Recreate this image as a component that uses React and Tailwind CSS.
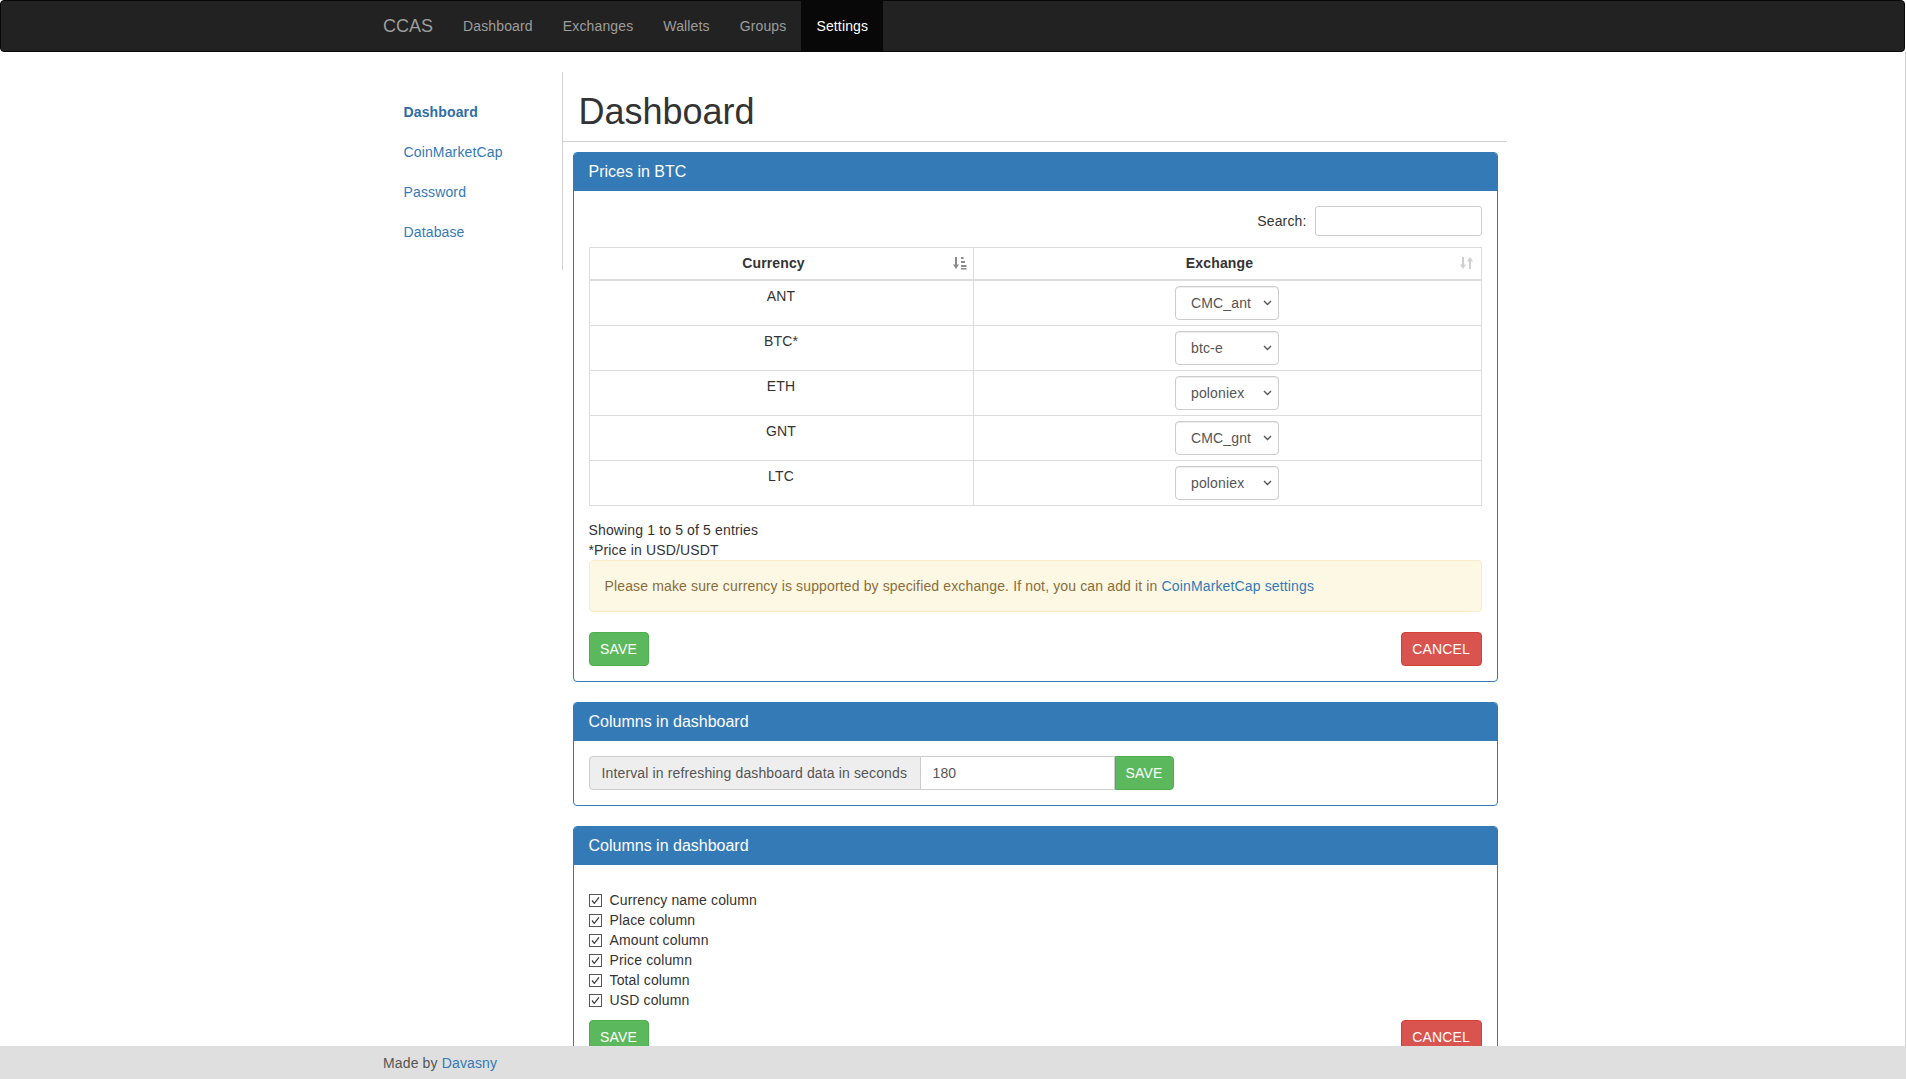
import { useState } from "react";

const rows = [
  { currency: "ANT", exchange: "CMC_ant" },
  { currency: "BTC*", exchange: "btc-e" },
  { currency: "ETH", exchange: "poloniex" },
  { currency: "GNT", exchange: "CMC_gnt" },
  { currency: "LTC", exchange: "poloniex" }
];

const columns = ["Currency name column", "Place column", "Amount column", "Price column", "Total column", "USD column"];

function SortAscIcon() {
  return (
    <svg width="14" height="14" viewBox="0 0 14 14" className="text-[#8a8a8a]">
      <rect x="2" y="1" width="2" height="8" fill="currentColor" />
      <polygon points="0,8.5 6,8.5 3,13" fill="currentColor" />
      <rect x="8" y="1" width="2.5" height="2" fill="currentColor" />
      <rect x="8" y="5" width="4" height="2" fill="currentColor" />
      <rect x="8" y="9" width="5.5" height="2" fill="currentColor" />
      <rect x="8" y="12" width="5.5" height="1.5" fill="currentColor" />
    </svg>
  );
}

function SortBothIcon() {
  return (
    <svg width="13" height="14" viewBox="0 0 13 14" className="text-[#cfcfcf]">
      <rect x="2" y="1" width="2" height="8" fill="currentColor" />
      <polygon points="0,8.5 6,8.5 3,13" fill="currentColor" />
      <rect x="9" y="5" width="2" height="8" fill="currentColor" />
      <polygon points="7,5.5 13,5.5 10,1" fill="currentColor" />
    </svg>
  );
}

function FakeSelect({ value }) {
  return (
    <div className="mx-auto flex h-[34px] w-[104px] items-center justify-between rounded-[4px] border border-[#ccc] bg-white pl-[15px] pr-[6px] text-[14px] text-[#555] shadow-[inset_0_1px_1px_rgba(0,0,0,0.075)]">
      <span>{value}</span>
      <svg width="9" height="6" viewBox="0 0 9 6">
        <polyline points="1,1 4.5,4.5 8,1" fill="none" stroke="#555" strokeWidth="1.4" />
      </svg>
    </div>
  );
}

function CheckBox() {
  return (
    <svg width="13" height="13" viewBox="0 0 13 13" className="shrink-0">
      <rect x="0.5" y="0.5" width="12" height="12" fill="white" stroke="#555" />
      <polyline points="3,6.5 5.3,9.3 10,3.3" fill="none" stroke="#333" strokeWidth="1.2" />
    </svg>
  );
}

function Panel({ title, children }) {
  return (
    <div className="rounded-[4px] border border-[#337ab7] bg-white">
      <div className="rounded-t-[3px] bg-[#337ab7] px-[15px] py-[10px] text-[16px] leading-[18px] tracking-normal text-white">{title}</div>
      <div className="p-[15px]">{children}</div>
    </div>
  );
}

function Buttons() {
  return (
    <div className="flex justify-between">
      <button className="h-[34px] w-[60px] rounded-[4px] border border-[#4cae4c] bg-[#5cb85c] text-[14px] text-white">SAVE</button>
      <button className="h-[34px] w-[81px] rounded-[4px] border border-[#d43f3a] bg-[#d9534f] text-[14px] text-white">CANCEL</button>
    </div>
  );
}

export default function App() {
  const [interval, setInterval] = useState("180");
  const navItems = ["Dashboard", "Exchanges", "Wallets", "Groups", "Settings"];

  return (
    <div className="min-h-screen w-[1906px] bg-white font-['Liberation_Sans',Arial,sans-serif] text-[14px] leading-[20px] tracking-[0.14px] text-[#333]">
      <nav className="h-[52px] w-[1905px] rounded-[4px] border border-[#080808] bg-[#222]">
        <div className="ml-[367px] flex h-[50px] items-stretch">
          <a className="flex items-center px-[15px] text-[18px] tracking-normal text-[#9d9d9d]">CCAS</a>
          {navItems.map((item) => (
            <a key={item} className={item === "Settings" ? "flex items-center bg-[#080808] px-[15px] text-white" : "flex items-center px-[15px] text-[#9d9d9d]"}>
              {item}
            </a>
          ))}
        </div>
      </nav>

      <div className="w-[1906px] border-r border-[#d0d0d0] pb-[60px]">
        <div className="mx-auto flex w-[1170px] pt-[20px]">
          <aside className="w-[195px] self-start border-r border-[#d0d0d0] pb-[18px] pl-[36px] pt-[20px]">
            <ul>
              <li className="py-[10px] font-bold text-[#2e6da4]">Dashboard</li>
              <li className="py-[10px] text-[#337ab7]">CoinMarketCap</li>
              <li className="py-[10px] text-[#337ab7]">Password</li>
              <li className="py-[10px] text-[#337ab7]">Database</li>
            </ul>
          </aside>

          <main className="w-[944px]">
            <div className="border-b border-[#d0d0d0] pb-[9px] pl-[16px] pt-[20px]">
              <h1 className="text-[36px] leading-[40px] tracking-normal text-[#333]">Dashboard</h1>
            </div>

            <div className="ml-[10px] mr-[9px] mt-[10px] flex flex-col gap-[20px]">
              <Panel title="Prices in BTC">
                <div className="flex items-center justify-end gap-[8px]">
                  <span>Search:</span>
                  <input className="h-[30px] w-[167px] rounded-[3px] border border-[#ccc] px-[10px] text-[12px] outline-none" />
                </div>
                <table className="mt-[11px] w-full border-collapse border border-[#ddd]">
                  <thead>
                    <tr className="border-b-2 border-[#ddd]">
                      <th className="relative w-[384px] border-r border-[#ddd] pb-[6px] pl-[5px] pr-[20px] pt-[5px] text-center font-bold">
                        Currency
                        <span className="absolute right-[6px] top-[8px]"><SortAscIcon /></span>
                      </th>
                      <th className="relative pb-[6px] pl-[5px] pr-[20px] pt-[5px] text-center font-bold">
                        Exchange
                        <span className="absolute right-[8px] top-[8px]"><SortBothIcon /></span>
                      </th>
                    </tr>
                  </thead>
                  <tbody>
                    {rows.map((row) => (
                      <tr key={row.currency} className="border-t border-[#ddd]">
                        <td className="border-r border-[#ddd] p-[5px] text-center align-top">{row.currency}</td>
                        <td className="p-[5px] text-center">
                          <FakeSelect value={row.exchange} />
                        </td>
                      </tr>
                    ))}
                  </tbody>
                </table>
                <div className="pt-[14px]">Showing 1 to 5 of 5 entries</div>
                <div>*Price in USD/USDT</div>
                <div className="mb-[20px] rounded-[4px] border border-[#faebcc] bg-[#fcf8e3] p-[15px] text-[#8a6d3b]">
                  Please make sure currency is supported by specified exchange. If not, you can add it in <a className="text-[#337ab7]">CoinMarketCap settings</a>
                </div>
                <Buttons />
              </Panel>

              <Panel title="Columns in dashboard">
                <div className="flex h-[34px]">
                  <span className="flex w-[332px] items-center rounded-l-[4px] border border-[#ccc] bg-[#eee] px-[12px] text-[#555]">Interval in refreshing dashboard data in seconds</span>
                  <input
                    className="w-[194px] border border-l-0 border-[#ccc] px-[12px] text-[14px] text-[#555] outline-none"
                    value={interval}
                    onChange={(e) => setInterval(e.target.value)}
                  />
                  <button className="w-[59px] rounded-r-[4px] border border-[#4cae4c] bg-[#5cb85c] text-white">SAVE</button>
                </div>
              </Panel>

              <Panel title="Columns in dashboard">
                <div className="pt-[10px]">
                  {columns.map((col) => (
                    <label key={col} className="flex h-[20px] items-center gap-[8px]">
                      <CheckBox />
                      <span>{col}</span>
                    </label>
                  ))}
                </div>
                <div className="mt-[10px]">
                  <Buttons />
                </div>
              </Panel>
            </div>
          </main>
        </div>
      </div>

      <footer className="fixed bottom-0 left-0 h-[33px] w-full bg-[#dfdfdf]">
        <div className="mx-auto flex h-full w-[1170px] items-center pl-[15px] text-[#555]">
          Made by&nbsp;<a className="text-[#337ab7]">Davasny</a>
        </div>
      </footer>
    </div>
  );
}
